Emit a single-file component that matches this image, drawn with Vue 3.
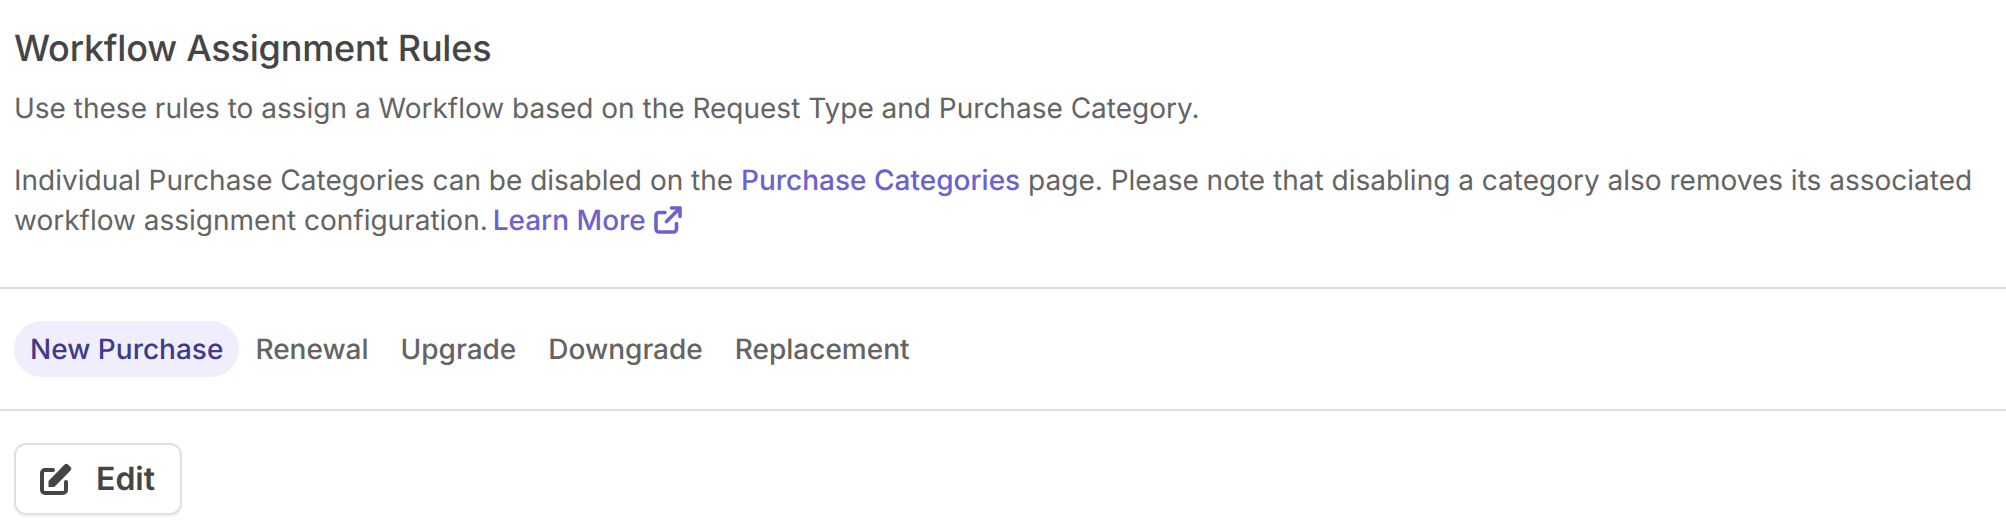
<script setup>
const tabs = ['New Purchase', 'Renewal', 'Upgrade', 'Downgrade', 'Replacement'];
</script>

<template>
    <div class="page">
        <header class="intro">
            <h1 class="title">Workflow Assignment Rules</h1>
            <p class="text">Use these rules to assign a Workflow based on the Request Type and Purchase Category.</p>
            <p class="text text-gap">
                Individual Purchase Categories can be disabled on the
                <a class="link">Purchase Categories</a>
                page. Please note that disabling a category also removes its associated workflow assignment configuration.
                <a class="link learn">Learn More<svg class="external" viewBox="0 0 28 28" fill="none" stroke="currentColor" stroke-width="3.600" stroke-linecap="round" stroke-linejoin="round"><path d="M11 6.500H5a3 3 0 0 0-3 3V23a3 3 0 0 0 3 3h14.500a3 3 0 0 0 3-3v-5.500" /><path d="M12.500 15.500 26 2M17.500 2H26v8.500" /></svg></a>
            </p>
        </header>

        <nav class="tabs">
            <button
                v-for="(tab, i) in tabs"
                :key="tab"
                :class="['tab', { active: i === 0 }]"
            >
                {{ tab }}
            </button>
        </nav>

        <div class="actions">
            <button class="edit">
                <svg class="edit-icon" viewBox="0 0 32 32" fill="none"><path d="M13 7H5a3 3 0 0 0-3 3v17a3 3 0 0 0 3 3h18a3 3 0 0 0 3-3v-8" stroke="currentColor" stroke-width="4" stroke-linecap="round" /><path d="M8.500 24v-6L24.600 1.600a2.400 2.400 0 0 1 3.400 0l2.500 2.500a2.400 2.400 0 0 1 0 3.400L14.300 24z" fill="currentColor" /></svg>
                Edit
            </button>
        </div>
    </div>
</template>

<style>
body {
    background: #ffffff;
}
</style>

<style scoped>
.page {
    width: 2006px;
    height: 526px;
    overflow: hidden;
    font-family: Inter, "Liberation Sans", sans-serif;
    text-rendering: geometricPrecision;
    color: #646464;
}

.intro {
    padding: 28px 14px 47px;
    border-bottom: 2px solid #e0e0e0;
}

.title {
    margin: 0;
    font-size: 36px;
    line-height: 40px;
    font-weight: 500;
    letter-spacing: -0.2px;
    color: #454545;
}

.text {
    margin: 20px 0 0;
    font-size: 28px;
    line-height: 40px;
}

.text-gap {
    margin-top: 32px;
}

.link {
    color: #6c62cf;
    font-weight: 500;
}

.learn {
    margin-left: -3px;
}

.external {
    width: 28px;
    height: 28px;
    margin-left: 8px;
    vertical-align: -4px;
}

.tabs {
    display: flex;
    padding: 32px 14px;
    border-bottom: 2px solid #e0e0e0;
}

.tab {
    height: 56px;
    padding: 0 16px;
    border: none;
    border-radius: 28px;
    background: none;
    font: 500 28px/40px Inter, "Liberation Sans", sans-serif;
    text-rendering: geometricPrecision;
    color: #646464;
}

.tab.active {
    background: #f0eefc;
    color: #3f3a8c;
}

.actions {
    padding: 32px 14px;
}

.edit {
    display: flex;
    align-items: center;
    gap: 24px;
    width: 168px;
    height: 72px;
    padding: 0 24px;
    border: 2px solid #e0e0e0;
    border-radius: 12px;
    background: #ffffff;
    box-shadow: 0 2px 2px rgba(0, 0, 0, 0.06);
    font: 600 32px/40px Inter, "Liberation Sans", sans-serif;
    text-rendering: geometricPrecision;
    color: #454545;
}

.edit-icon {
    flex: none;
    width: 32px;
    height: 32px;
}
</style>
